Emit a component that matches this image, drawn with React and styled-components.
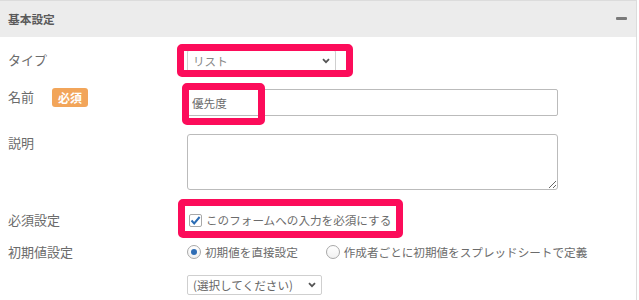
import React from 'react';
import styled, { createGlobalStyle } from 'styled-components';

const Global = createGlobalStyle`
  html, body { margin: 0; padding: 0; background: #fff; }
  body { font-family: "Noto Sans CJK JP", "Noto Sans", sans-serif; }
  * { box-sizing: border-box; }
`;

const Page = styled.div`
  position: relative;
  width: 639px;
  height: 300px;
  overflow: hidden;
`;

const Panel = styled.section`
  width: 637px;
  height: 300px;
  border-top: 1px solid #dcdcdc;
  border-right: 1px solid #dcdcdc;
`;

const Header = styled.header`
  height: 36px;
  background: #ececec;
  display: flex;
  align-items: center;
  justify-content: space-between;
  padding: 0 9px 1px 8px;
`;

const Title = styled.h2`
  margin: 0;
  font-size: 11.7px;
  font-weight: 700;
  color: #5a5a5a;
  line-height: 16px;
`;

const Minus = styled.span`
  width: 11px;
  height: 3px;
  border-radius: 1px;
  background: #7a7a7a;
`;

const Body = styled.div`
  padding-top: 13px;
  display: flex;
  flex-direction: column;
`;

const Row = styled.div`
  display: grid;
  grid-template-columns: 187px 1fr;
  align-items: start;
  margin-top: ${p => p.$gap || 0}px;
`;

const Label = styled.div`
  display: flex;
  align-items: center;
  height: 20px;
  padding-left: 8px;
  margin-top: ${p => p.$off || 0}px;
  font-size: 13px;
  color: #6b6b6b;
  line-height: 20px;
`;

const Badge = styled.span`
  margin-left: 18px;
  height: 19px;
  padding: 0 6px;
  border-radius: 3px;
  background: #f2a55a;
  color: #fff;
  font-size: 12px;
  font-weight: 700;
  line-height: 19px;
`;

const FakeSelect = styled.div`
  display: flex;
  align-items: center;
  justify-content: space-between;
  width: ${p => p.$w}px;
  height: ${p => p.$h}px;
  padding: 0 5px 0 5px;
  border: 1px solid #cfcfcf;
  border-radius: 2px;
  background: #fff;
  font-size: 11.6px;
  color: ${p => p.$color || '#888'};
`;

const TextInput = styled.input`
  width: 371px;
  height: 27px;
  padding: 0 4px;
  border: 1px solid #bbb;
  border-radius: 2px;
  font-family: inherit;
  font-size: 11.6px;
  color: #6b6b6b;
  outline: none;
`;

const TextArea = styled.textarea`
  display: block;
  width: 371px;
  height: 56px;
  border: 1px solid #bbb;
  border-radius: 3px;
  resize: vertical;
  font-family: inherit;
  outline: none;
`;

const Inline = styled.label`
  display: flex;
  align-items: center;
  gap: 4px;
  height: 20px;
  margin-left: ${p => p.$ml || 0}px;
  font-size: 11.6px;
  color: #6b6b6b;
`;

const Options = styled.div`
  display: flex;
  align-items: center;
  gap: 28px;
`;

const Box = styled.span`
  display: flex;
  align-items: center;
  justify-content: center;
  width: 13px;
  height: 13px;
  border: 1px solid #a8a8a8;
  border-radius: 2px;
  background: #fff;
`;

const Radio = styled.span`
  display: flex;
  align-items: center;
  justify-content: center;
  width: 14px;
  height: 14px;
  border: 1px solid #a8a8a8;
  border-radius: 50%;
  background: linear-gradient(#fff, #f1f1f1);
  &::after {
    content: '';
    display: ${p => (p.$on ? 'block' : 'none')};
    width: 6px;
    height: 6px;
    border-radius: 50%;
    background: #2f6db5;
  }
`;

const Highlight = styled.div`
  position: absolute;
  left: ${p => p.$x}px;
  top: ${p => p.$y}px;
  width: ${p => p.$w}px;
  height: ${p => p.$h}px;
  border: 7px solid #fc0c5a;
  border-radius: 5px;
  pointer-events: none;
`;

const Chevron = () => (
  <svg width="8" height="6" viewBox="0 0 8 6">
    <path d="M1 1.2 L4 4.2 L7 1.2" fill="none" stroke="#555" strokeWidth="1.8" />
  </svg>
);

const Check = () => (
  <svg width="11" height="11" viewBox="0 0 11 11">
    <path d="M1.5 5.5 L4.2 8.4 L9.6 2" fill="none" stroke="#2b6cb4" strokeWidth="2" />
  </svg>
);

export default function App() {
  return (
    <Page>
      <Global />
      <Panel>
        <Header>
          <Title>基本設定</Title>
          <Minus />
        </Header>
        <Body>
          <Row>
            <Label>タイプ</Label>
            <FakeSelect $w={149} $h={22}>
              <span>リスト</span>
              <Chevron />
            </FakeSelect>
          </Row>
          <Row $gap={17}>
            <Label $off={-2}>
              名前<Badge>必須</Badge>
            </Label>
            <TextInput defaultValue="優先度" readOnly />
          </Row>
          <Row $gap={18}>
            <Label $off={-1}>説明</Label>
            <TextArea />
          </Row>
          <Row $gap={20}>
            <Label>必須設定</Label>
            <Inline $ml={2}>
              <Box><Check /></Box>
              このフォームへの入力を必須にする
            </Inline>
          </Row>
          <Row $gap={12}>
            <Label>初期値設定</Label>
            <Options>
              <Inline>
                <Radio $on />
                初期値を直接設定
              </Inline>
              <Inline>
                <Radio />
                作成者ごとに初期値をスプレッドシートで定義
              </Inline>
            </Options>
          </Row>
          <Row $gap={13}>
            <Label />
            <FakeSelect $w={135} $h={20} $color="#666">
              <span>(選択してください)</span>
              <Chevron />
            </FakeSelect>
          </Row>
        </Body>
      </Panel>
      <Highlight $x={177} $y={44} $w={176} $h={33} />
      <Highlight $x={182} $y={83} $w={83} $h={42} />
      <Highlight $x={178} $y={199} $w={225} $h={39} />
    </Page>
  );
}
